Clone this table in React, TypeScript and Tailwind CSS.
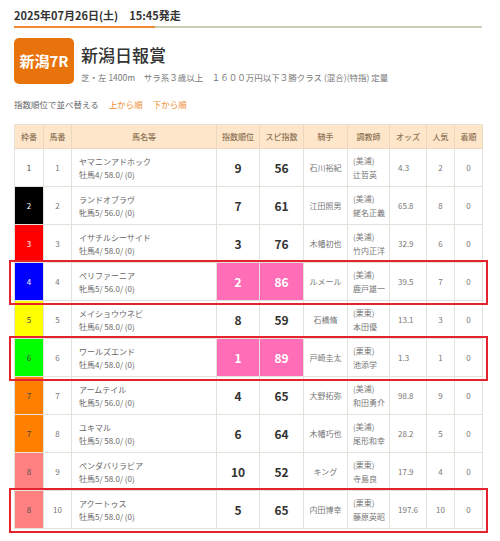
import React from 'react';

type Horse = {
  waku: number;
  uma: number;
  name: string;
  info: string;
  rank: number;
  spi: number;
  jockey: string;
  area: string;
  trainer: string;
  odds: string;
  pop: number;
  result: number;
  hl?: boolean;
};

const horses: Horse[] = [
  { waku: 1, uma: 1, name: 'ヤマニンアドホック', info: '牡馬4/ 58.0/ (0)', rank: 9, spi: 56, jockey: '石川裕紀', area: '(美浦)', trainer: '辻哲英', odds: '4.3', pop: 2, result: 0 },
  { waku: 2, uma: 2, name: 'ランドオブラヴ', info: '牝馬5/ 56.0/ (0)', rank: 7, spi: 61, jockey: '江田照男', area: '(美浦)', trainer: '蛯名正義', odds: '65.8', pop: 8, result: 0 },
  { waku: 3, uma: 3, name: 'イサチルシーサイド', info: '牡馬4/ 58.0/ (0)', rank: 3, spi: 76, jockey: '木幡初也', area: '(美浦)', trainer: '竹内正洋', odds: '32.9', pop: 6, result: 0 },
  { waku: 4, uma: 4, name: 'ペリファーニア', info: '牝馬5/ 56.0/ (0)', rank: 2, spi: 86, jockey: 'ルメール', area: '(美浦)', trainer: '鹿戸雄一', odds: '39.5', pop: 7, result: 0, hl: true },
  { waku: 5, uma: 5, name: 'メイショウウネビ', info: '牡馬6/ 58.0/ (0)', rank: 8, spi: 59, jockey: '石橋脩', area: '(栗東)', trainer: '本田優', odds: '13.1', pop: 3, result: 0 },
  { waku: 6, uma: 6, name: 'ワールズエンド', info: '牡馬4/ 58.0/ (0)', rank: 1, spi: 89, jockey: '戸崎圭太', area: '(栗東)', trainer: '池添学', odds: '1.3', pop: 1, result: 0, hl: true },
  { waku: 7, uma: 7, name: 'アームテイル', info: '牝馬5/ 56.0/ (0)', rank: 4, spi: 65, jockey: '大野拓弥', area: '(美浦)', trainer: '和田勇介', odds: '98.8', pop: 9, result: 0 },
  { waku: 7, uma: 8, name: 'ユキマル', info: '牡馬5/ 58.0/ (0)', rank: 6, spi: 64, jockey: '木幡巧也', area: '(美浦)', trainer: '尾形和幸', odds: '28.2', pop: 5, result: 0 },
  { waku: 8, uma: 9, name: 'ペンダバリラビア', info: '牡馬5/ 58.0/ (0)', rank: 10, spi: 52, jockey: 'キング', area: '(栗東)', trainer: '寺島良', odds: '17.9', pop: 4, result: 0 },
  { waku: 8, uma: 10, name: 'アクートゥス', info: '牡馬5/ 58.0/ (0)', rank: 5, spi: 65, jockey: '内田博幸', area: '(栗東)', trainer: '藤原英昭', odds: '197.6', pop: 10, result: 0, hl: true },
];

const wakuStyle: Record<number, string> = {
  1: 'bg-white text-[#444]',
  2: 'bg-black text-white',
  3: 'bg-[#ff0000] text-white',
  4: 'bg-[#0000ff] text-white',
  5: 'bg-[#ffff00] text-[#444]',
  6: 'bg-[#00ff00] text-[#444]',
  7: 'bg-[#ff8000] text-[#444]',
  8: 'bg-[#ff8080] text-[#555]',
};

const cols = 'grid grid-cols-[29px_28px_145px_43px_44px_44px_42px_37px_28px_28px]';
const cell = 'border-r border-b border-[#e3e1d9]';

const headers = ['枠番', '馬番', '馬名等', '指数順位', 'スピ指数', '騎手', '調教師', 'オッズ', '人気', '着順'];

export default function App() {
  return (
    <div className="min-h-[541px] bg-white pl-[14px] text-[#333]" style={{ fontFamily: '"Noto Sans CJK JP", "Noto Sans", sans-serif' }}>
      <div className="w-[468px]">
        <div className="h-[26px] pt-[7px] text-[11px] font-bold leading-[16px]">
          2025年07月26日(土)　15:45発走
        </div>
        <div className="flex h-[2px]">
          <div className="w-[141px] bg-[#ef8a2e]" />
          <div className="flex-1 bg-[#cbcdb6]" />
        </div>

        <div className="mt-[10px] flex">
          <div className="flex h-[46px] w-[60px] items-center justify-center rounded-[5px] bg-[#e8730c] text-[15px] font-bold text-white">
            新潟7R
          </div>
          <div className="ml-[7px]">
            <div className="mt-[5px] text-[17px] font-medium leading-[24px] text-[#333]">新潟日報賞</div>
            <div className="mt-[4px] text-[8.5px] leading-[12px] text-[#777]">
              芝・左 1400m　サラ系３歳以上　１６００万円以下３勝クラス (混合)(特指) 定量
            </div>
          </div>
        </div>

        <div className="mt-[12px] flex h-[16px] items-center text-[8.5px] text-[#666]">
          <span>指数順位で並べ替える</span>
          <span className="ml-[10px] text-[#ef8a2e]">上から順</span>
          <span className="ml-[10px] text-[#ef8a2e]">下から順</span>
        </div>

        <div className="mt-[12px] w-[469px] border-l border-t border-[#e3e1d9]">
          <div className={`${cols} h-[24px] bg-[#fde6c9] text-[8px] font-medium text-[#8d7356]`}>
            {headers.map((h) => (
              <div key={h} className={`${cell} border-[#ead9bf] flex items-center justify-center`}>
                {h}
              </div>
            ))}
          </div>

          {horses.map((h) => {
            const pink = h.rank <= 2;
            return (
              <div key={h.uma} className={`${cols} relative h-[38px] text-[8px] text-[#777]`}>
                <div className={`${cell} ${wakuStyle[h.waku]} flex items-center justify-center`}>{h.waku}</div>
                <div className={`${cell} flex items-center justify-center`}>{h.uma}</div>
                <div className={`${cell} flex flex-col justify-center pl-[7px] leading-[13px] text-[#666]`}>
                  <span>{h.name}</span>
                  <span>{h.info}</span>
                </div>
                <div
                  className={`${cell} flex items-center justify-center text-[12px] font-bold ${
                    pink ? 'bg-[#ff6eb6] text-white' : 'text-[#333]'
                  }`}
                >
                  {h.rank}
                </div>
                <div
                  className={`${cell} flex items-center justify-center text-[12px] font-bold ${
                    pink ? 'bg-[#ff6eb6] text-white' : 'text-[#333]'
                  }`}
                >
                  {h.spi}
                </div>
                <div className={`${cell} flex items-center justify-center`}>{h.jockey}</div>
                <div className={`${cell} flex flex-col justify-center pl-[5px] leading-[14px]`}>
                  <span>{h.area}</span>
                  <span>{h.trainer}</span>
                </div>
                <div className={`${cell} flex items-center pl-[8px]`}>{h.odds}</div>
                <div className={`${cell} flex items-center justify-center`}>{h.pop}</div>
                <div className={`${cell} flex items-center justify-center`}>{h.result}</div>
                {h.hl && (
                  <div className="pointer-events-none absolute -left-[6px] -right-[5px] -top-[3px] -bottom-[4px] z-10 border-2 border-[#e5232f]" />
                )}
              </div>
            );
          })}
        </div>
      </div>
    </div>
  );
}
